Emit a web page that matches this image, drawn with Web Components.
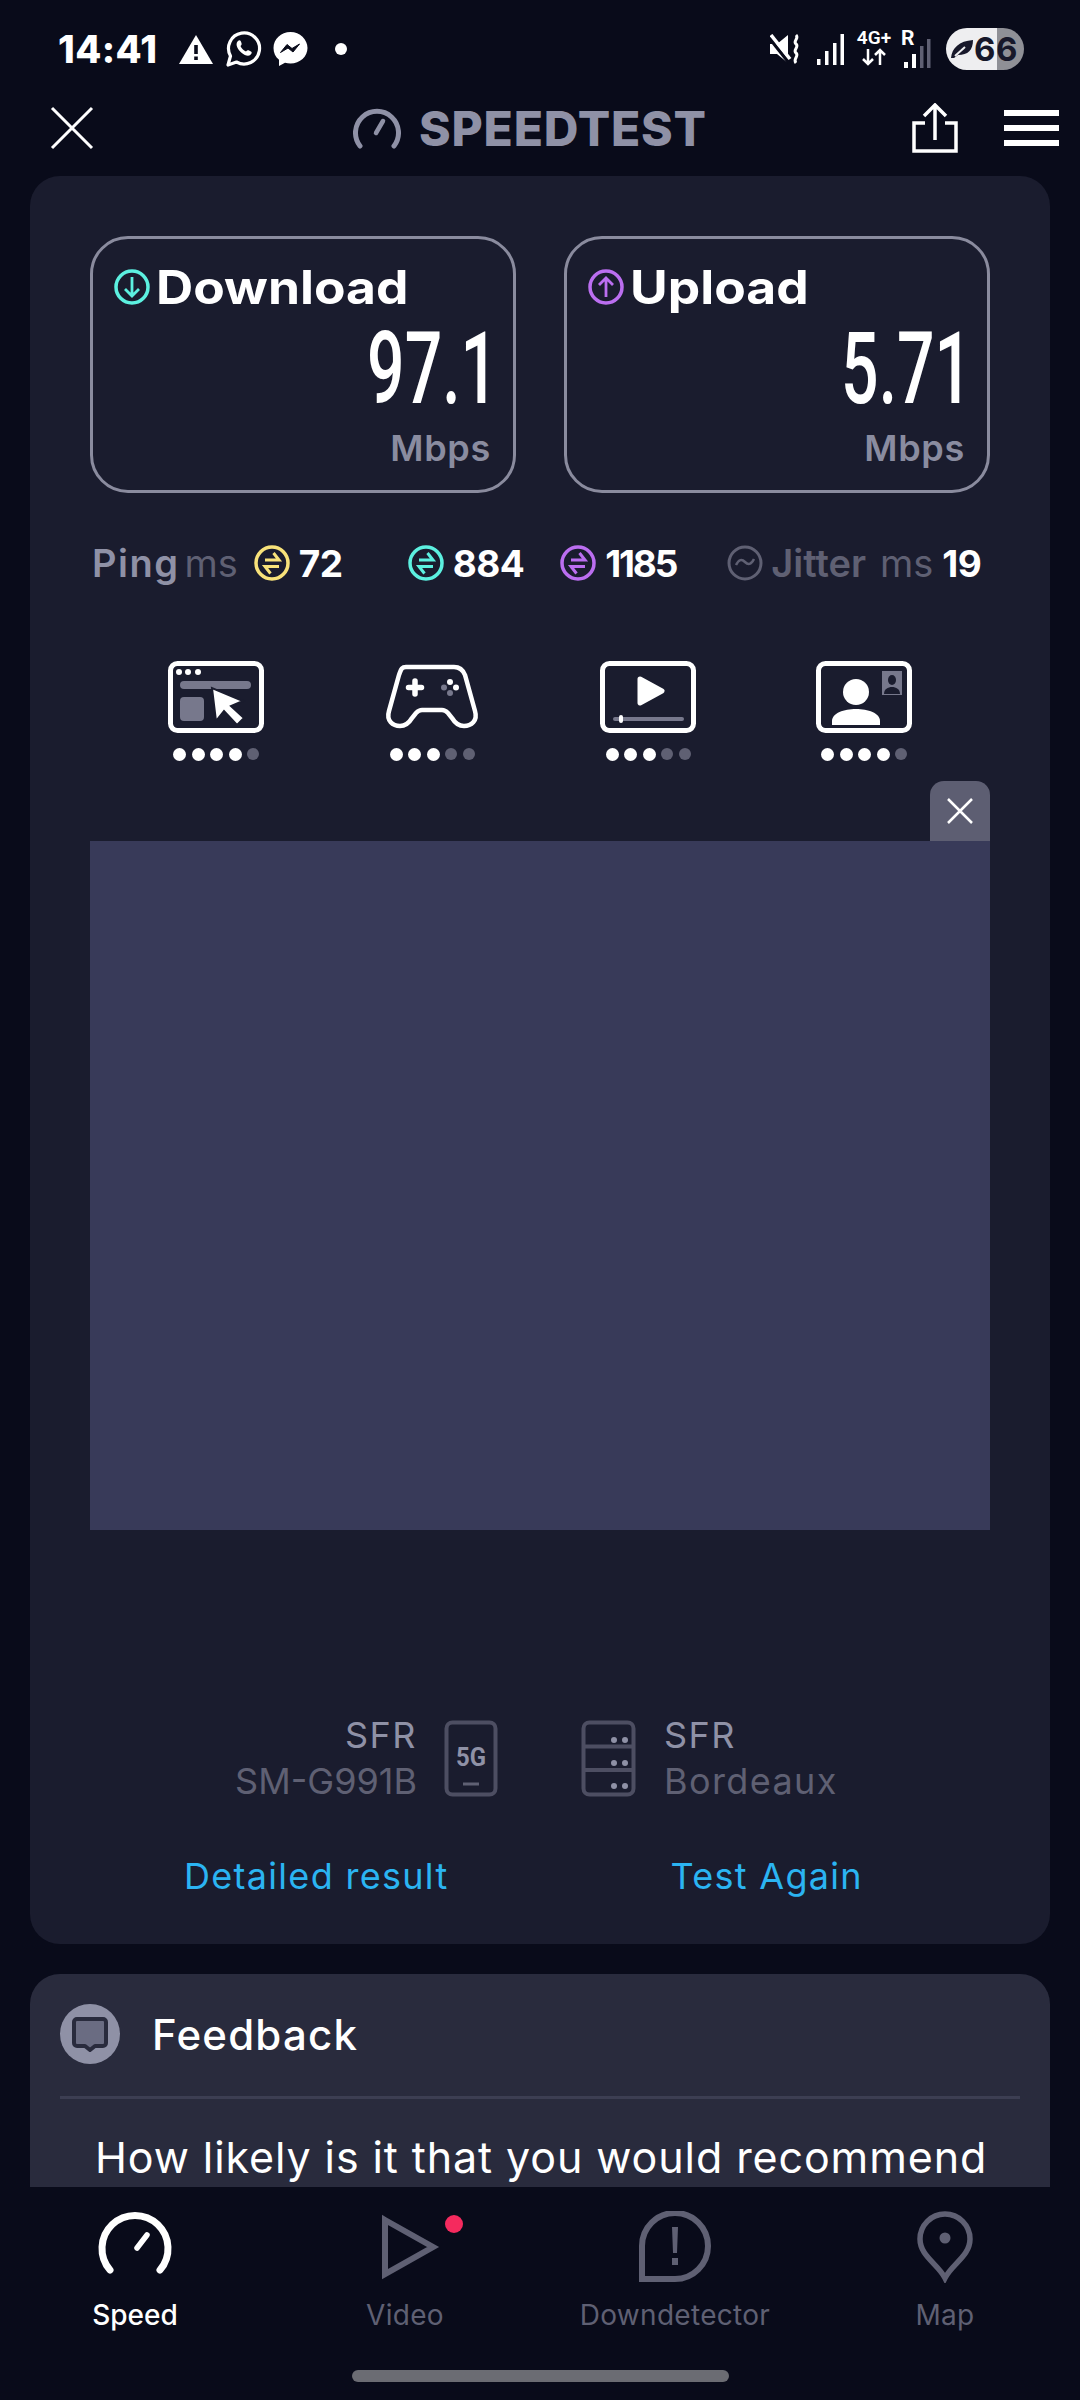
<!DOCTYPE html>
<html lang="en">
<head>
  <meta charset="UTF-8">
  <title>Speedtest</title>
  <style>
    html, body { margin: 0; padding: 0; background: #090b1a; }
    body { font-family: Inter, "Liberation Sans", sans-serif; }
  </style>
</head>
<body>
  <st-app></st-app>

  <template id="st-app">
    <style>
      :host { display: flex; flex-direction: column; width: 1080px; height: 2400px; overflow: hidden; background: #090b1a; }
      .scroll { flex: 1; min-height: 0; overflow: hidden; padding: 0 30px; }
    </style>
    <st-status-bar></st-status-bar>
    <st-top-bar></st-top-bar>
    <div class="scroll">
      <st-result></st-result>
      <st-feedback></st-feedback>
    </div>
    <st-tabs></st-tabs>
  </template>

  <template id="st-status-bar">
    <style>
      :host { display: flex; align-items: center; height: 98px; padding-left: 58px; color: #fff; box-sizing: border-box; }
      .time { font: 800 38px Inter, sans-serif; letter-spacing: .4px; width: 120px; }
      svg { display: block; flex: none; }
      .net { position: relative; width: 36px; height: 42px; margin-left: 12px; font: 600 19px/20px Roboto, sans-serif; text-align: center; }
      .r { position: relative; width: 30px; height: 42px; margin-left: 9px; font: 700 21px/20px Roboto, sans-serif; }
      .batt { display: flex; align-items: center; width: 78px; height: 42px; margin-left: 15px; border-radius: 21px; color: #17182a;
        background: linear-gradient(90deg, #eeeef0 0 51px, #8f9096 51px); font: 700 33px Inter, sans-serif; overflow: hidden; }
      .batt span { margin-left: 0; letter-spacing: .5px; }
    </style>
    <span class="time">14:41</span>
    <svg width="36" height="30" viewBox="0 0 36 30"><path d="M18 1 35 30H1Z" fill="#fff"/><path d="M16.2 11h3.600v9h-3.600zM16.200 22.500h3.600v3.600h-3.600z" fill="#090b1a"/></svg>
    <svg style="margin-left:11px" width="37" height="37" viewBox="0 0 37 37"><path d="M3 34 5.500 25A15.500 15.500 0 1 1 11.500 31Z" fill="none" stroke="#fff" stroke-width="3.200" stroke-linejoin="round"/><path d="M12.500 10.500c2-2 3-1.500 3.800 1 .6 1.800.5 2.200-.8 3.500 1 2.500 3 4.500 5.500 5.500 1.300-1.300 1.800-1.400 3.500-.7 2.600 1 3 2 1 4-2 2-5.500 1-9-2s-6.500-8-4-11.300Z" fill="#fff"/></svg>
    <svg style="margin-left:11px" width="35" height="36" viewBox="0 0 35 36"><path d="M17.500 1C8 1 .5 8 .5 17c0 4.800 2 9 5.500 11.800V35l6-3.300c1.700.5 3.600.8 5.500.8 9.500 0 17-7 17-15.500S27 1 17.500 1Z" fill="#fff"/><path d="M7.500 21.500 14 13.500l5 4 7.500-4.500-6.500 8-5-4Z" fill="#090b1a" stroke="#090b1a" stroke-linejoin="round"/></svg>
    <svg style="margin-left:27px" width="12" height="12" viewBox="0 0 12 12"><circle cx="6" cy="6" r="6" fill="#fff"/></svg>
    <svg style="margin-left:423px" width="30" height="30" viewBox="0 0 30 30"><path d="M0 10h7L18 1v28L7 20H0Z" fill="#fff"/><path d="M1 6 20 30" stroke="#090b1a" stroke-width="3.500"/><path d="M1 1 20 25" stroke="#fff" stroke-width="3.500"/><path d="M26 1c3.500 3.500-3.500 6 0 9s-3.500 6 0 9 -3.500 6 0 10" fill="none" stroke="#fff" stroke-width="3"/></svg>
    <svg style="margin-left:17px" width="27" height="31" viewBox="0 0 27 31"><path d="M0 25h3.500v6H0zM8 17h3.500v14H8zM16 9h3.500v22H16zM23.500 0H27v31h-3.500z" fill="#fff"/></svg>
    <div class="net">4G+<svg style="position:absolute;left:5px;top:20px" width="26" height="18" viewBox="0 0 26 18"><path d="M7 1v15M2 11l5 5 5-5M19 17V2M14 7l5-5 5 5" fill="none" stroke="#fff" stroke-width="2.500"/></svg></div>
    <div class="r">R<svg style="position:absolute;left:0;top:10px" width="30" height="32" viewBox="0 0 30 32"><path d="M3 24h4v6H3zM11 16h4v14h-4z" fill="#fff"/><path d="M19 8h3.500v22H19zM26 1h3.500v29H26z" fill="#5f6073"/></svg></div>
    <div class="batt">
      <svg style="margin-left:4px" width="24" height="20" viewBox="0 0 24 20"><path d="M1 19C2 9 9 2 23 1c0 10-5 15-15 15l-4 3Z" fill="#17182a"/><path d="M5 17 15 8" stroke="#eeeef0" stroke-width="2"/></svg>
      <span>66</span>
    </div>
  </template>

  <template id="st-top-bar">
    <style>
      :host { display: flex; align-items: center; height: 60px; padding-left: 50px; color: #8f91a6; }
      svg { display: block; flex: none; }
      .brand { font: 800 48px Inter, sans-serif; letter-spacing: .8px; margin-left: 18px; width: 290px; white-space: nowrap; }
    </style>
    <svg width="44" height="44" viewBox="0 0 44 44"><path d="M2 2 42 42M42 2 2 42" stroke="#fff" stroke-width="3"/></svg>
    <svg style="margin-left:259px" width="48" height="44" viewBox="0 0 48 44"><path d="M7 40A21.500 21.500 0 1 1 41 40" fill="none" stroke="#8f91a6" stroke-width="5" stroke-linecap="round"/><path d="M30 15 23 27" stroke="#8f91a6" stroke-width="4.500" stroke-linecap="round"/></svg>
    <span class="brand">SPEEDTEST</span>
    <svg style="margin-left:203px" width="46" height="50" viewBox="0 0 46 50"><path d="M13 20H2v28h42V20H33M23 37V3M12 13 23 2l11 11" fill="none" stroke="#fff" stroke-width="3.500"/></svg>
    <svg style="margin-left:46px" width="55" height="36" viewBox="0 0 55 36"><path d="M0 0h55v6H0zM0 15h55v6H0zM0 30h55v6H0z" fill="#fff"/></svg>
  </template>

  <template id="st-speed-box">
    <style>
      :host { display: block; width: 426px; height: 257px; box-sizing: border-box; border: 3px solid #8a8b9e; border-radius: 38px; padding: 30px 22px 0 21px; }
      .head { display: flex; align-items: center; gap: 6px; height: 36px; color: #fff; font: 700 46px Inter, sans-serif; }
      .label { display: inline-block; transform: scaleX(1.12); transform-origin: left center; }
      ::slotted(svg) { display: block; flex: none; }
      .num { height: 100px; margin: 14px -7px 0 0; text-align: right; color: #fff; font: 500 100px/100px Roboto, sans-serif; transform: scaleX(.66); transform-origin: right center; white-space: nowrap; }
      .unit { margin: 8px 0 0; text-align: right; color: #8a8ca0; font: 600 36px/42px Inter, sans-serif; letter-spacing: .7px; }
    </style>
    <div class="head"><slot name="icon"></slot><span class="label"></span></div>
    <div class="num"></div>
    <div class="unit">Mbps</div>
  </template>

  <template id="st-stat">
    <style>
      :host { display: flex; align-items: center; height: 40px; font: 600 38px Inter, sans-serif; white-space: nowrap; }
      ::slotted(svg) { display: block; flex: none; margin-right: 9px; }
      .v { color: #fff; font: 700 37px Inter, sans-serif; letter-spacing: -.5px; }
      :host([tight]) .v { letter-spacing: -2.200px; }
    </style>
    <slot></slot><span class="v"></span>
  </template>

  <template id="st-quality">
    <style>
      :host { display: flex; flex-direction: column; align-items: center; width: 96px; height: 100px; }
      ::slotted(svg) { display: block; }
      .dots { display: flex; align-items: center; gap: 5.500px; margin-top: 14px; height: 14px; }
      i { display: block; width: 13px; height: 13px; border-radius: 50%; background: #fff; }
      i.off { width: 12px; height: 12px; background: #5f6073; }
    </style>
    <slot></slot>
    <div class="dots"></div>
  </template>

  <template id="st-result">
    <style>
      :host { display: block; box-sizing: border-box; height: 1768px; margin-top: 18px; padding: 60px 60px 0; background: #1a1c2e; border-radius: 30px; }
      .boxes { display: flex; gap: 48px; }
      .stats { display: flex; margin-top: 50px; padding-left: 2px; }
      .muted { color: #8f91a6; letter-spacing: 1.500px; }
      .dim { color: #5f6073; font-weight: 400; margin: 0 16px 0 5px; }
      .quality { display: flex; justify-content: center; gap: 120px; margin-top: 78px; }
      .tab { display: flex; justify-content: flex-end; margin-top: 20px; }
      .close { display: flex; align-items: center; justify-content: center; width: 60px; height: 60px; background: #5d5e72; border-radius: 14px 14px 0 0; }
      .ad { height: 689px; background: #383a59; }
      .prov { display: flex; align-items: center; height: 92px; margin-top: 182px; font: 400 36px/46px Inter, sans-serif; color: #8f91a6; }
      .prov .l { width: 327px; text-align: right; }
      .prov span { letter-spacing: 1.500px; }
      .prov b { display: block; font-weight: 400; color: #5f6073; }
      .prov .far b { letter-spacing: 1.400px; }
      svg { display: block; flex: none; }
      .links { display: flex; margin-top: 49px; color: #2bb4f2; font: 400 36px/46px Inter, sans-serif; padding-left: 94px; }
      .links span { letter-spacing: 1.300px; }
      .links span + span { margin-left: 222px; }
    </style>
    <div class="boxes">
      <st-speed-box label="Download" value="97.1">
        <svg slot="icon" width="36" height="36" viewBox="0 0 36 36"><circle cx="18" cy="18" r="16" fill="none" stroke="#5cf0e0" stroke-width="3.500"/><path d="M18 8v19M11 20l7 7 7-7" fill="none" stroke="#5cf0e0" stroke-width="2.800"/></svg>
      </st-speed-box>
      <st-speed-box label="Upload" value="5.71">
        <svg slot="icon" width="36" height="36" viewBox="0 0 36 36"><circle cx="18" cy="18" r="16" fill="none" stroke="#bb6ef0" stroke-width="3.500"/><path d="M18 28V9M11 16l7-7 7 7" fill="none" stroke="#bb6ef0" stroke-width="2.800"/></svg>
      </st-speed-box>
    </div>

    <div class="stats">
      <st-stat value="72"><span class="muted">Ping</span><span class="dim">ms</span>
        <svg width="36" height="36" viewBox="0 0 36 36"><circle cx="18" cy="18" r="16" fill="none" stroke="#f8e27a" stroke-width="3.500"/><path d="M11 15H25L19.500 8M25 21.500H11l5.500 7" fill="none" stroke="#f8e27a" stroke-width="3"/></svg></st-stat>
      <st-stat value="884" style="margin-left:65px">
        <svg width="36" height="36" viewBox="0 0 36 36"><circle cx="18" cy="18" r="16" fill="none" stroke="#5cf0e0" stroke-width="3.500"/><path d="M11 15H25L19.500 8M25 21.500H11l5.500 7" fill="none" stroke="#5cf0e0" stroke-width="3"/></svg></st-stat>
      <st-stat value="1185" tight style="margin-left:36px">
        <svg width="36" height="36" viewBox="0 0 36 36"><circle cx="18" cy="18" r="16" fill="none" stroke="#bb6ef0" stroke-width="3.500"/><path d="M11 15H25L19.500 8M25 21.500H11l5.500 7" fill="none" stroke="#bb6ef0" stroke-width="3"/></svg></st-stat>
      <st-stat value="19" style="margin-left:51px">
        <svg style="margin-right:8px" width="36" height="36" viewBox="0 0 36 36"><circle cx="18" cy="18" r="16" fill="none" stroke="#5f6073" stroke-width="3"/><path d="M9 20c3-6 6-6 9-3s6 3 9-3" fill="none" stroke="#5f6073" stroke-width="2.500"/></svg>
        <span style="color:#5f6073">Jitter</span><span class="dim" style="margin:0 9px 0 14px">ms</span></st-stat>
    </div>

    <div class="quality">
      <st-quality on="4">
        <svg width="96" height="72" viewBox="0 0 96 72"><rect x="2.500" y="2.500" width="91" height="67" rx="7" fill="none" stroke="#fff" stroke-width="5"/><circle cx="11" cy="11" r="3" fill="#fff"/><circle cx="20" cy="11" r="3" fill="#fff"/><circle cx="30" cy="11" r="3" fill="#fff"/><rect x="12" y="20" width="71" height="8" rx="4" fill="#77788c"/><rect x="12" y="36" width="24" height="24" rx="4" fill="#77788c"/><path d="M44 27 48 60 56 50 69 64 76 57 63 45 75 40Z" fill="#fff" stroke="#1a1c2e" stroke-width="2"/></svg>
      </st-quality>
      <st-quality on="3">
        <svg width="96" height="72" viewBox="0 0 96 72"><path d="M22 6H70C75 6 79 9 81 14L91 50C94 60 87 65 80 65 74 65 71 62 68 57L64 52C61 49 60 49 58 49H38C36 49 35 49 32 52L28 57C25 62 22 65 16 65 9 65 2 60 5 50L15 14C17 9 17 6 22 6Z" fill="none" stroke="#fff" stroke-width="4.500"/><path d="M31 20v13M24.500 26.500h13" stroke="#fff" stroke-width="5.500" stroke-linecap="round"/><circle cx="66" cy="21" r="3" fill="#fff"/><circle cx="72" cy="26.500" r="3" fill="#fff"/><circle cx="60" cy="26.500" r="3" fill="#77788c"/><circle cx="66" cy="32" r="3" fill="#77788c"/></svg>
      </st-quality>
      <st-quality on="3">
        <svg width="96" height="72" viewBox="0 0 96 72"><rect x="2.500" y="2.500" width="91" height="67" rx="7" fill="none" stroke="#fff" stroke-width="5"/><path d="M40 18 62 30 40 42Z" fill="#fff" stroke="#fff" stroke-width="5" stroke-linejoin="round"/><rect x="13" y="56" width="71" height="4" rx="2" fill="#77788c"/><rect x="19" y="54" width="4" height="8" rx="2" fill="#fff"/></svg>
      </st-quality>
      <st-quality on="4">
        <svg width="96" height="72" viewBox="0 0 96 72"><rect x="2.500" y="2.500" width="91" height="67" rx="7" fill="none" stroke="#fff" stroke-width="5"/><ellipse cx="40" cy="31" rx="13" ry="13" fill="#fff"/><path d="M16 64V60C16 52 28 48 40 48S64 52 64 60V64Z" fill="#fff"/><rect x="66" y="10" width="20" height="24" fill="#77788c"/><ellipse cx="76" cy="19" rx="4" ry="5" fill="#1a1c2e"/><path d="M68 33c0-5 4-7 8-7s8 2 8 7Z" fill="#1a1c2e"/></svg>
      </st-quality>
    </div>

    <div class="tab"><div class="close"><svg width="28" height="28" viewBox="0 0 28 28"><path d="M2 2 26 26M26 2 2 26" stroke="#fff" stroke-width="2.500"/></svg></div></div>
    <div class="ad"></div>

    <div class="prov">
      <div class="l"><span>SFR</span><b>SM-G991B</b></div>
      <svg style="margin-left:27px" width="54" height="77" viewBox="0 0 54 77"><rect x="2.500" y="2.500" width="49" height="72" rx="6" fill="none" stroke="#4d4e62" stroke-width="4"/><text x="27" y="46" text-anchor="middle" fill="#8f91a6" font-family="Roboto, sans-serif" font-weight="700" font-size="25" textLength="30" lengthAdjust="spacingAndGlyphs">5G</text><path d="M19 64h16" stroke="#5f6073" stroke-width="3"/></svg>
      <svg style="margin-left:83px" width="55" height="77" viewBox="0 0 55 77"><rect x="2.500" y="2.500" width="50" height="72" rx="6" fill="none" stroke="#4d4e62" stroke-width="4"/><path d="M2 26.500H53M2 50H53" stroke="#4d4e62" stroke-width="4"/><g fill="#8f91a6"><circle cx="33" cy="20" r="3"/><circle cx="44" cy="20" r="3"/><circle cx="33" cy="43" r="3"/><circle cx="44" cy="43" r="3"/><circle cx="33" cy="66" r="3"/><circle cx="44" cy="66" r="3"/></g></svg>
      <div class="far" style="margin-left:28px"><span>SFR</span><b>Bordeaux</b></div>
    </div>

    <div class="links"><span>Detailed result</span><span>Test Again</span></div>
  </template>

  <template id="st-feedback">
    <style>
      :host { display: block; height: 300px; margin-top: 30px; background: #292b3d; border-radius: 30px 30px 0 0; box-sizing: border-box; padding: 30px 30px 0; color: #fff; }
      .head { display: flex; align-items: center; height: 60px; gap: 32px; font: 500 42px Inter, sans-serif; letter-spacing: 1.200px; }
      svg { display: block; }
      hr { height: 3px; margin: 32px 0 0; border: 0; background: #3c3e52; }
      p { margin: 33px 0 0 35px; font: 400 43px/50px Inter, sans-serif; white-space: nowrap; letter-spacing: .9px; }
    </style>
    <div class="head">
      <svg width="60" height="60" viewBox="0 0 60 60"><circle cx="30" cy="30" r="30" fill="#8f91a6"/><path d="M17 15H43A3 3 0 0 1 46 18V39A3 3 0 0 1 43 42H35L30 46 25 42H17A3 3 0 0 1 14 39V18A3 3 0 0 1 17 15Z" fill="#6a6c82" stroke="#292b3d" stroke-width="4" stroke-linejoin="round"/></svg>
      <span>Feedback</span>
    </div>
    <hr>
    <p>How likely is it that you would recommend</p>
  </template>

  <template id="st-tab">
    <style>
      :host { position: relative; display: flex; flex-direction: column; align-items: center; color: #5f6073; font: 400 28px Inter, sans-serif; letter-spacing: .3px; }
      :host([active]) { color: #fff; font-weight: 500; letter-spacing: 0; }
      ::slotted(svg) { display: block; }
      .label { margin-top: 14px; line-height: 36px; white-space: nowrap; }
      .badge { display: none; position: absolute; left: 175px; top: 4px; width: 18px; height: 18px; border-radius: 50%; background: #f52a5e; }
      :host([dot]) .badge { display: block; }
    </style>
    <slot></slot>
    <span class="label"></span>
    <span class="badge"></span>
  </template>

  <template id="st-tabs">
    <style>
      :host { display: block; height: 213px; box-sizing: border-box; padding-top: 24px; background: #090b1a; }
      .row { display: grid; grid-template-columns: repeat(4, 270px); }
      .home { width: 377px; height: 12px; margin: 37px auto 0; border-radius: 6px; background: #6b6c73; }
    </style>
    <div class="row">
      <st-tab label="Speed" active>
        <svg width="80" height="72" viewBox="0 0 80 72"><path d="M15 59A33 33 0 1 1 65 59" fill="none" stroke="#fff" stroke-width="7" stroke-linecap="round"/><path d="M52 24 42 37" stroke="#fff" stroke-width="5.500" stroke-linecap="round"/></svg>
      </st-tab>
      <st-tab label="Video" dot>
        <svg width="80" height="72" viewBox="0 0 80 72"><path d="M20 9 68 36 20 63Z" fill="none" stroke="#5f6073" stroke-width="6"/></svg>
      </st-tab>
      <st-tab label="Downdetector">
        <svg width="80" height="72" viewBox="0 0 80 72"><path d="M7 68V35A33 33 0 1 1 40 68Z" fill="none" stroke="#5f6073" stroke-width="6"/><path d="M37 16h6l-1 26h-4ZM37 47h6v7h-6Z" fill="#5f6073"/></svg>
      </st-tab>
      <st-tab label="Map">
        <svg width="80" height="72" viewBox="0 0 80 72"><path d="M40 67C33 53 15 45 15 28A25 25 0 0 1 65 28C65 45 47 53 40 67Z" fill="none" stroke="#5f6073" stroke-width="5.500"/><circle cx="40" cy="27" r="5.500" fill="#5f6073"/></svg>
      </st-tab>
    </div>
    <div class="home"></div>
  </template>

  <script>
    // plain elements: clone the template of the same name into an open root
    function stamp(el, id) {
      const root = el.attachShadow({mode: 'open'});
      root.appendChild(document.getElementById(id).content.cloneNode(true));
      return root;
    }
    class Plain extends HTMLElement {
      constructor() {
        super();
        stamp(this, this.localName);
      }
    }
    class StSpeedBox extends Plain {
      connectedCallback() {
        this.shadowRoot.querySelector('.label').textContent = this.getAttribute('label');
        this.shadowRoot.querySelector('.num').textContent = this.getAttribute('value');
      }
    }
    class StStat extends Plain {
      connectedCallback() {
        this.shadowRoot.querySelector('.v').textContent = this.getAttribute('value');
      }
    }
    class StQuality extends Plain {
      connectedCallback() {
        const on = +this.getAttribute('on');
        const dots = this.shadowRoot.querySelector('.dots');
        for (let i = 0; i < 5; i++) {
          const dot = document.createElement('i');
          if (i >= on) dot.className = 'off';
          dots.appendChild(dot);
        }
      }
    }
    class StTab extends Plain {
      connectedCallback() {
        this.shadowRoot.querySelector('.label').textContent = this.getAttribute('label');
      }
    }
    ['st-status-bar', 'st-top-bar', 'st-result', 'st-feedback', 'st-tabs', 'st-app'].forEach(name => {
      customElements.define(name, class extends Plain {});
    });
    customElements.define('st-speed-box', StSpeedBox);
    customElements.define('st-stat', StStat);
    customElements.define('st-quality', StQuality);
    customElements.define('st-tab', StTab);
  </script>
</body>
</html>
